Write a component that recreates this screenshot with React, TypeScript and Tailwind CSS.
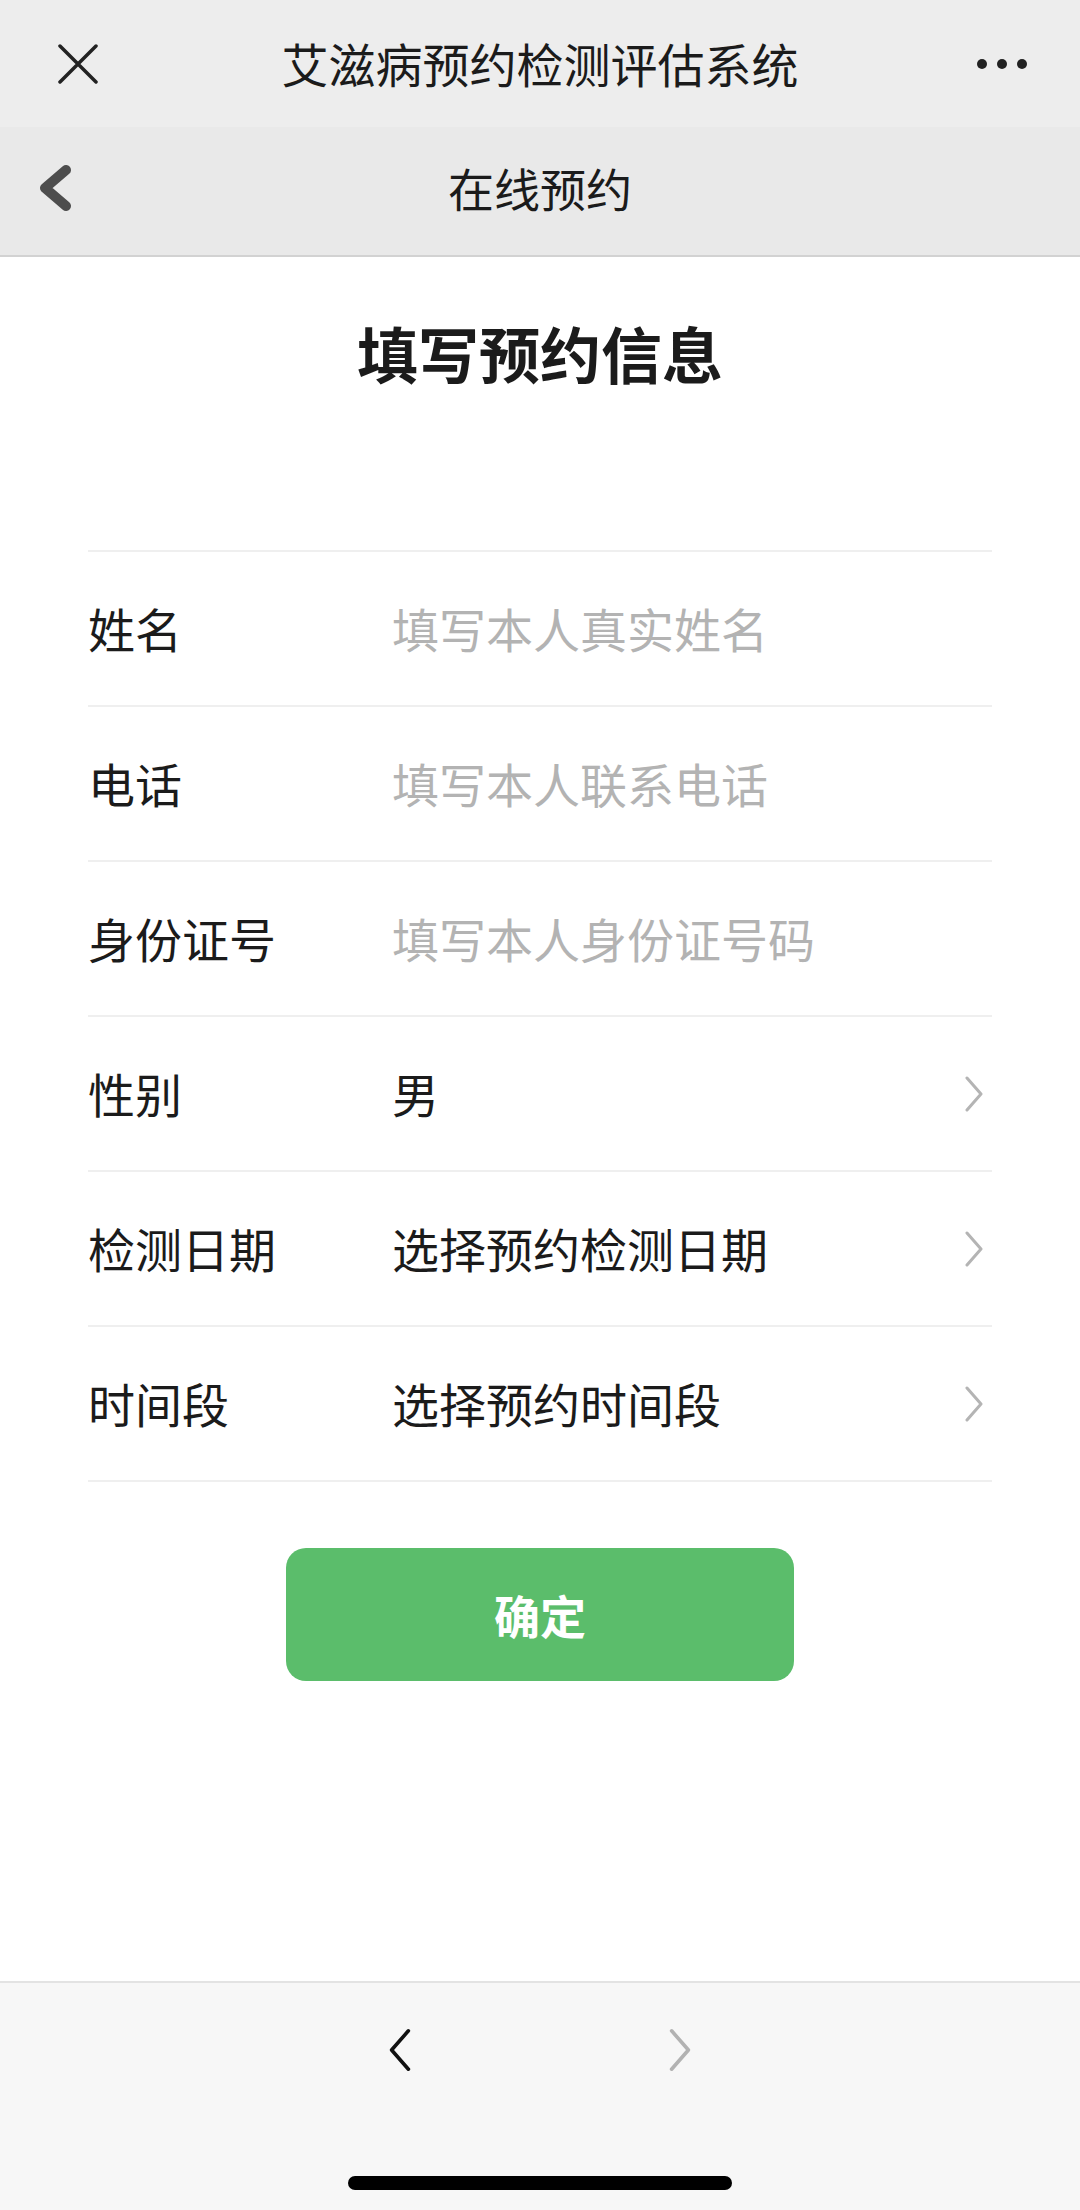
import { useState } from 'react';

type Field = {
  label: string;
  placeholder?: string;
  value?: string;
  select?: boolean;
};

const fields: Field[] = [
  { label: '姓名', placeholder: '填写本人真实姓名' },
  { label: '电话', placeholder: '填写本人联系电话' },
  { label: '身份证号', placeholder: '填写本人身份证号码' },
  { label: '性别', value: '男', select: true },
  { label: '检测日期', value: '选择预约检测日期', select: true },
  { label: '时间段', value: '选择预约时间段', select: true },
];

const Chevron = ({ dir = 'right', className = '' }: { dir?: 'left' | 'right'; className?: string }) => (
  <svg viewBox="0 0 20 36" className={className} fill="none" stroke="currentColor" strokeWidth="3" strokeLinecap="round" strokeLinejoin="round">
    {dir === 'right' ? <path d="M3 2 L17 18 L3 34" /> : <path d="M17 2 L3 18 L17 34" />}
  </svg>
);

const FormRow = ({ field }: { field: Field }) => {
  const [text, setText] = useState('');
  return (
    <div className="flex h-[155px] items-center border-b-2 border-[#efefef]">
      <div className="w-[304px] shrink-0 text-[47px] text-[#1b1b1b]">{field.label}</div>
      {field.select ? (
        <div className="flex flex-1 items-center justify-between">
          <span className="text-[47px] text-[#1b1b1b]">{field.value}</span>
          <Chevron className="mr-[8px] h-[36px] w-[20px] text-[#b4b4b4]" />
        </div>
      ) : (
        <input
          value={text}
          onChange={e => setText(e.target.value)}
          placeholder={field.placeholder}
          className="min-w-0 flex-1 bg-transparent text-[47px] text-[#1b1b1b] outline-none placeholder:text-[#b3b3b3]"
        />
      )}
    </div>
  );
};

export default function App() {
  return (
    <div className="flex min-h-[2210px] w-full flex-col bg-white font-['Noto_Sans_CJK_SC','Noto_Sans',sans-serif]">
      {/* 顶部标题栏 */}
      <div className="flex h-[127px] items-center bg-[#ededed]">
        <div className="flex w-[160px] items-center pl-[58px]">
          <svg viewBox="0 0 40 40" className="h-[40px] w-[40px]" stroke="#222" strokeWidth="3.5" strokeLinecap="round">
            <path d="M2 2 L38 38 M38 2 L2 38" />
          </svg>
        </div>
        <div className="flex-1 text-center text-[47px] text-[#1b1b1b]">艾滋病预约检测评估系统</div>
        <div className="flex w-[160px] items-center justify-end gap-[10px] pr-[53px]">
          <span className="h-[10px] w-[10px] rounded-full bg-[#222]" />
          <span className="h-[10px] w-[10px] rounded-full bg-[#222]" />
          <span className="h-[10px] w-[10px] rounded-full bg-[#222]" />
        </div>
      </div>

      {/* 页面导航 */}
      <div className="flex h-[130px] items-center border-b-2 border-[#d2d2d2] bg-[#e9e9e9]">
        <div className="flex w-[160px] items-center pb-[6px] pl-[38px]">
          <svg viewBox="0 0 34 48" className="h-[48px] w-[34px]" fill="none" stroke="#4d4d4d" strokeWidth="10" strokeLinecap="round" strokeLinejoin="round">
            <path d="M28 6 L7 24 L28 42" />
          </svg>
        </div>
        <div className="flex-1 pb-[8px] text-center text-[46px] text-[#1b1b1b]">在线预约</div>
        <div className="w-[160px]" />
      </div>

      <h1 className="pt-[65px] text-center text-[61px] leading-[61px] font-bold text-[#1b1b1b]">填写预约信息</h1>

      <div className="mx-[88px] mt-[167px] border-t-2 border-[#efefef]">
        {fields.map(field => (
          <FormRow key={field.label} field={field} />
        ))}
      </div>

      <div className="mt-[66px] flex justify-center">
        <button className="h-[133px] w-[508px] rounded-[20px] bg-[#5bbd6b] text-[46px] font-bold text-white">确定</button>
      </div>

      <div className="flex-1" />

      {/* 底部浏览器栏 */}
      <div className="flex h-[229px] flex-col items-center border-t-2 border-[#e3e3e3] bg-[#f7f7f7]">
        <div className="flex gap-[256px] pt-[44px]">
          <Chevron dir="left" className="h-[46px] w-[24px] text-[#111]" />
          <Chevron className="h-[46px] w-[24px] text-[#b2b2b2]" />
        </div>
        <div className="mt-[103px] h-[14px] w-[384px] rounded-full bg-black" />
      </div>
    </div>
  );
}
